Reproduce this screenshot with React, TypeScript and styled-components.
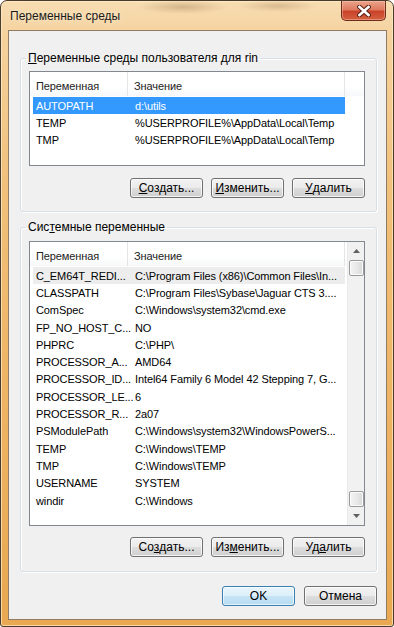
import styled, { createGlobalStyle } from "styled-components";

const GlobalStyle = createGlobalStyle`
  html, body {
    margin: 0;
    padding: 0;
    background: #ffffff;
  }
  body {
    font-family: "Liberation Sans", Arial, sans-serif;
    font-size: 12px;
    color: #000;
  }
  * {
    box-sizing: border-box;
  }
`;

type VarRow = { name: string; value: string; state?: "selected" | "inactive" };

const userVars: VarRow[] = [
  { name: "AUTOPATH", value: "d:\\utils", state: "selected" },
  { name: "TEMP", value: "%USERPROFILE%\\AppData\\Local\\Temp" },
  { name: "TMP", value: "%USERPROFILE%\\AppData\\Local\\Temp" },
];

const systemVars: VarRow[] = [
  { name: "C_EM64T_REDI...", value: "C:\\Program Files (x86)\\Common Files\\In...", state: "inactive" },
  { name: "CLASSPATH", value: "C:\\Program Files\\Sybase\\Jaguar CTS 3...." },
  { name: "ComSpec", value: "C:\\Windows\\system32\\cmd.exe" },
  { name: "FP_NO_HOST_C...", value: "NO" },
  { name: "PHPRC", value: "C:\\PHP\\" },
  { name: "PROCESSOR_A...", value: "AMD64" },
  { name: "PROCESSOR_ID...", value: "Intel64 Family 6 Model 42 Stepping 7, G..." },
  { name: "PROCESSOR_LE...", value: "6" },
  { name: "PROCESSOR_R...", value: "2a07" },
  { name: "PSModulePath", value: "C:\\Windows\\system32\\WindowsPowerS..." },
  { name: "TEMP", value: "C:\\Windows\\TEMP" },
  { name: "TMP", value: "C:\\Windows\\TEMP" },
  { name: "USERNAME", value: "SYSTEM" },
  { name: "windir", value: "C:\\Windows" },
];

const CloseGlyph = () => (
  <svg width="14" height="12" viewBox="0 0 14 12">
    <path d="M2.5 2 L11.5 10 M11.5 2 L2.5 10" stroke="#5a2216" strokeWidth="4.6" strokeLinecap="square" />
    <path d="M2.5 2 L11.5 10 M11.5 2 L2.5 10" stroke="#ffffff" strokeWidth="2.6" strokeLinecap="square" />
  </svg>
);

const ArrowUp = () => (
  <svg width="7" height="4" viewBox="0 0 7 4">
    <path d="M0 4 L3.5 0 L7 4 Z" fill="#606060" />
  </svg>
);

const ArrowDown = () => (
  <svg width="7" height="4" viewBox="0 0 7 4">
    <path d="M0 0 L3.5 4 L7 0 Z" fill="#606060" />
  </svg>
);

const VarList = ({ rows, height, scroll }: { rows: VarRow[]; height: number; scroll?: boolean }) => (
  <ListBox style={{ height }}>
    <ListMain>
      <Header>
        <HeadCell $w={98}>Переменная</HeadCell>
        <HeadCell $w={217}>Значение</HeadCell>
        {!scroll && <HeadFill />}
      </Header>
      {rows.map((r, i) => (
        <Row key={i} $state={r.state}>
          <NameCell>{r.name}</NameCell>
          <ValueCell>{r.value}</ValueCell>
        </Row>
      ))}
    </ListMain>
    {scroll && (
      <ScrollBar>
        <ScrollArrow>
          <ArrowUp />
        </ScrollArrow>
        <Thumb />
        <ScrollTrack />
        <Thumb />
        <ScrollArrow>
          <ArrowDown />
        </ScrollArrow>
      </ScrollBar>
    )}
  </ListBox>
);

const App = () => {
  return (
    <>
      <GlobalStyle />
      <Window>
        <TitleBar>
          <Title>Переменные среды</Title>
          <CloseButton>
            <CloseGlyph />
          </CloseButton>
        </TitleBar>
        <Client>
          <Group>
            <Legend>
              <u>П</u>еременные среды пользователя для rin
            </Legend>
            <VarList rows={userVars} height={95} />
            <ButtonRow>
              <Button>
                <u>С</u>оздать...
              </Button>
              <Button>
                <u>И</u>зменить...
              </Button>
              <Button>
                <u>У</u>далить
              </Button>
            </ButtonRow>
          </Group>
          <Group $second>
            <Legend>
              Сис<u>т</u>емные переменные
            </Legend>
            <VarList rows={systemVars} height={285} scroll />
            <ButtonRow $tight>
              <Button>
                Со<u>з</u>дать...
              </Button>
              <Button>
                Из<u>м</u>енить...
              </Button>
              <Button>
                Уд<u>а</u>лить
              </Button>
            </ButtonRow>
          </Group>
          <DialogButtons>
            <Button $default>OK</Button>
            <Button>Отмена</Button>
          </DialogButtons>
        </Client>
      </Window>
    </>
  );
};

export default App;

const Window = styled.div`
  width: 394px;
  height: 627px;
  display: flex;
  flex-direction: column;
  padding: 0 6px 6px 7px;
  border: 1px solid #4a3c2c;
  border-radius: 7px 7px 3px 3px;
  background: linear-gradient(180deg, #f7ddb2 0%, #f5d19c 6%, #f1c07a 30%, #eeb363 65%, #e9a851 100%);
  box-shadow: inset 0 0 0 1px rgba(255, 236, 200, 0.7);
`;

const TitleBar = styled.div`
  height: 29px;
  display: flex;
  align-items: flex-start;
  background:
    radial-gradient(ellipse 45px 7px at 175px 6px, rgba(150, 110, 70, 0.35), transparent),
    radial-gradient(ellipse 40px 6px at 270px 5px, rgba(150, 110, 70, 0.3), transparent);
`;

const Title = styled.div`
  padding: 8px 0 0 2px;
  font-size: 12px;
  color: #1a1a1a;
  text-shadow: 0 0 6px rgba(255, 245, 225, 0.9);
`;

const CloseButton = styled.div`
  margin-left: auto;
  margin-right: 1px;
  width: 45px;
  height: 20px;
  display: flex;
  align-items: center;
  justify-content: center;
  border: 1px solid #6e2c1c;
  border-top: none;
  border-radius: 0 0 5px 5px;
  background: linear-gradient(180deg, #eaa48c 0%, #de7b60 45%, #c9432a 55%, #d4603f 100%);
  box-shadow: inset 0 0 0 1px rgba(255, 200, 180, 0.45);
`;

const Client = styled.div`
  flex: 1;
  display: flex;
  flex-direction: column;
  background: #f0f0f0;
  border: 1px solid #8f7c62;
  padding: 20px 10px 0 11px;
`;

const Group = styled.fieldset<{ $second?: boolean }>`
  margin: ${(p) => (p.$second ? "8px" : "0")} 0 0 0;
  padding: ${(p) => (p.$second ? "6px 10px 14px 8px" : "5px 10px 13px 8px")};
  min-width: 0;
  width: 357px;
  border: 1px solid #d5dfe5;
  border-radius: 3px;
  box-shadow: inset 1px 1px 0 #fff, 1px 1px 0 #fff;
`;

const Legend = styled.legend`
  padding: 0 2px;
  margin-left: -3px;
  line-height: 15px;
  font-size: 12px;
  color: #000;
`;

const ListBox = styled.div`
  width: 336px;
  display: flex;
  background: #fff;
  border: 1px solid #828790;
  overflow: hidden;
  font-size: 11px;
  letter-spacing: -0.1px;
`;

const ListMain = styled.div`
  flex: 1;
  display: flex;
  flex-direction: column;
`;

const Header = styled.div`
  height: 24px;
  display: flex;
  background: linear-gradient(180deg, #ffffff 0%, #ffffff 60%, #f7f8fa 100%);
  margin-bottom: 1px;
`;

const HeadCell = styled.div<{ $w: number }>`
  width: ${(p) => p.$w}px;
  padding: 3px 0 0 6px;
  display: flex;
  align-items: center;
  border-right: 1px solid #e5e5e5;
  color: #222;
`;

const HeadFill = styled.div`
  flex: 1;
`;

const Row = styled.div<{ $state?: "selected" | "inactive" }>`
  height: 17.3px;
  width: 312px;
  margin-left: 3px;
  display: grid;
  grid-template-columns: 95px 1fr;
  align-items: center;
  white-space: nowrap;
  background: ${(p) => (p.$state === "selected" ? "#3399ff" : p.$state === "inactive" ? "#ededed" : "transparent")};
  color: ${(p) => (p.$state === "selected" ? "#fff" : "#000")};
`;

const NameCell = styled.span`
  padding-left: 3px;
`;

const ValueCell = styled.span`
  padding-left: 7px;
  overflow: hidden;
`;

const ScrollBar = styled.div`
  width: 17px;
  display: flex;
  flex-direction: column;
  align-items: center;
  background: #f1f1f1;
  border-left: 1px solid #eaeaea;
`;

const ScrollArrow = styled.div`
  height: 18px;
  width: 100%;
  display: flex;
  align-items: center;
  justify-content: center;
`;

const Thumb = styled.div`
  width: 15px;
  height: 16px;
  border: 1px solid #9a9a9a;
  border-radius: 2px;
  background: linear-gradient(90deg, #f4f4f4 0%, #e8e8e8 50%, #d9d9d9 100%);
  box-shadow: inset 0 0 0 1px #fbfbfb;
`;

const ScrollTrack = styled.div`
  flex: 1;
`;

const ButtonRow = styled.div<{ $tight?: boolean }>`
  display: flex;
  justify-content: flex-end;
  gap: 8px;
  margin-top: ${(p) => (p.$tight ? "11px" : "12px")};
  padding-right: 1px;
`;

const DialogButtons = styled.div`
  display: flex;
  justify-content: flex-end;
  gap: 9px;
  margin-top: 14px;
  width: 357px;
`;

const Button = styled.div<{ $default?: boolean }>`
  width: 73px;
  height: 20px;
  display: flex;
  align-items: center;
  justify-content: center;
  border: 1px solid ${(p) => (p.$default ? "#3c7fb1" : "#707070")};
  border-radius: 3px;
  color: #000;
  background: ${(p) =>
    p.$default
      ? "linear-gradient(180deg, #e9f5fc 0%, #ddeffa 48%, #c6e4f6 52%, #b7dcf3 100%)"
      : "linear-gradient(180deg, #f2f2f2 0%, #ebebeb 48%, #dddddd 52%, #cfcfcf 100%)"};
  box-shadow: inset 0 0 0 1px ${(p) => (p.$default ? "rgba(255,255,255,0.6)" : "rgba(255,255,255,0.75)")};
  u {
    text-decoration: underline;
  }
`;
